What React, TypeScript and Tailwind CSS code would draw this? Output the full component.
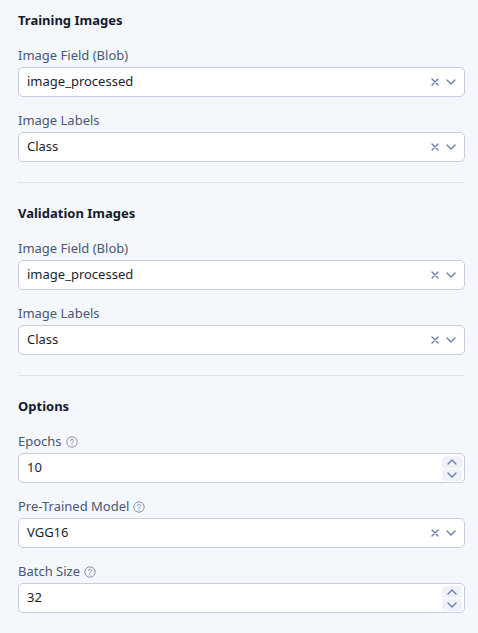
import { ReactNode } from "react"

const font = { fontFamily: '"Segoe UI", "Noto Sans", "Open Sans", sans-serif' }

function Chevron({ up = false }: { up?: boolean }) {
  return (
    <svg width="10" height="6" viewBox="0 0 10 6" fill="none" className={up ? "rotate-180" : ""}>
      <path d="M1 1l4 4 4-4" stroke="#6b7fae" strokeWidth="1.4" strokeLinecap="round" strokeLinejoin="round" />
    </svg>
  )
}

function Cross() {
  return (
    <svg width="8" height="8" viewBox="0 0 8 8" fill="none">
      <path d="M1 1l6 6M7 1L1 7" stroke="#6b7fae" strokeWidth="1.4" strokeLinecap="round" />
    </svg>
  )
}

function Help() {
  return (
    <svg width="12" height="12" viewBox="0 0 12 12" fill="none" className="ml-[4px]">
      <circle cx="6" cy="6" r="5.2" stroke="#8a94a8" strokeWidth="1" />
      <path d="M4.5 4.7a1.5 1.5 0 1 1 2 1.4c-.4.2-.5.4-.5.8v.3" stroke="#8a94a8" strokeWidth="1" strokeLinecap="round" />
      <circle cx="6" cy="8.8" r=".6" fill="#8a94a8" />
    </svg>
  )
}

function Field({ label, help, children }: { label: string; help?: boolean; children: ReactNode }) {
  return (
    <div className="flex flex-col">
      <div className="flex items-center h-[22px] text-[13px] text-[#4a5873]">
        {label}
        {help && <Help />}
      </div>
      {children}
    </div>
  )
}

function Select({ value }: { value: string }) {
  return (
    <div className="flex items-center h-[30px] bg-white border border-[#c5cee3] rounded-[5px] pl-[8px] pr-[8px] text-[13px] text-[#1a1f2e]">
      <span className="flex-1">{value}</span>
      <span className="flex items-center gap-[7px]">
        <Cross />
        <Chevron />
      </span>
    </div>
  )
}

function NumberInput({ value }: { value: string }) {
  return (
    <div className="flex items-center h-[30px] bg-white border border-[#c5cee3] rounded-[5px] pl-[8px] pr-[2px] text-[13px] text-[#1a1f2e]">
      <span className="flex-1">{value}</span>
      <span className="flex flex-col gap-[1px] w-[20px]">
        <span className="h-[12px] bg-[#eef1f7] rounded-t-[3px] flex items-center justify-center"><Chevron up /></span>
        <span className="h-[12px] bg-[#eef1f7] rounded-b-[3px] flex items-center justify-center"><Chevron /></span>
      </span>
    </div>
  )
}

function Section({ title, children }: { title: string; children: ReactNode }) {
  return (
    <section className="flex flex-col">
      <h2 className="text-[13px] font-bold text-[#141a2b] h-[20px] leading-[20px] mb-[15px]">{title}</h2>
      <div className="flex flex-col gap-[13px]">{children}</div>
    </section>
  )
}

export default function App() {
  return (
    <main style={font} className="min-h-[633px] w-[478px] bg-[#f4f7fc] pl-[18px] pr-[13px] pt-[10px]">
      <Section title="Training Images">
        <Field label="Image Field (Blob)"><Select value="image_processed" /></Field>
        <Field label="Image Labels"><Select value="Class" /></Field>
      </Section>
      <hr className="border-t border-[#dde2ec] mt-[20px] mb-[20px]" />
      <Section title="Validation Images">
        <Field label="Image Field (Blob)"><Select value="image_processed" /></Field>
        <Field label="Image Labels"><Select value="Class" /></Field>
      </Section>
      <hr className="border-t border-[#dde2ec] mt-[20px] mb-[20px]" />
      <Section title="Options">
        <Field label="Epochs" help><NumberInput value="10" /></Field>
        <Field label="Pre-Trained Model" help><Select value="VGG16" /></Field>
        <Field label="Batch Size" help><NumberInput value="32" /></Field>
      </Section>
    </main>
  )
}
